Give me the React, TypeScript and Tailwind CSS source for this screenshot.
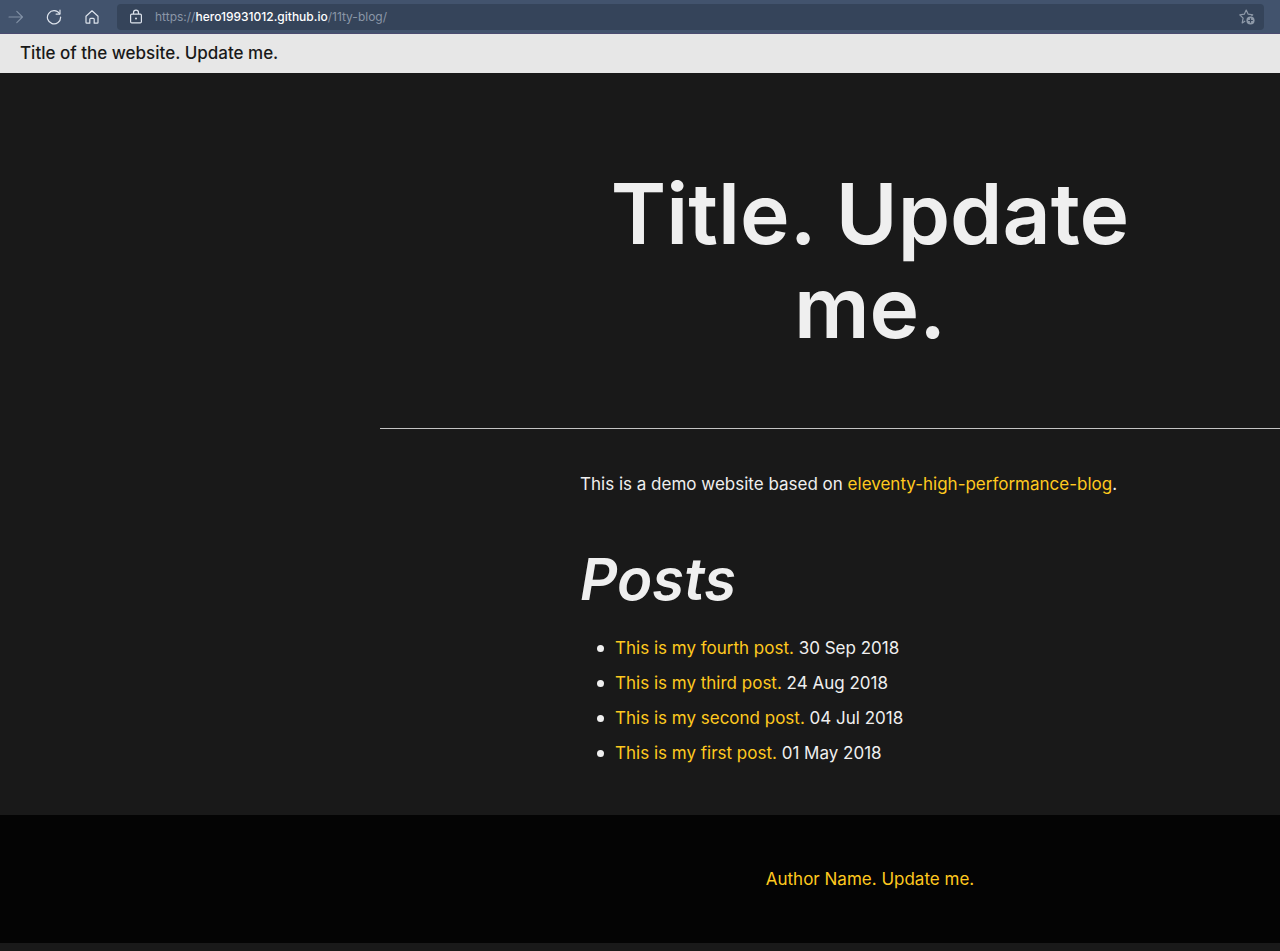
const posts = [
  { title: "This is my fourth post.", date: "30 Sep 2018" },
  { title: "This is my third post.", date: "24 Aug 2018" },
  { title: "This is my second post.", date: "04 Jul 2018" },
  { title: "This is my first post.", date: "01 May 2018" },
];

function ForwardIcon() {
  return (
    <svg viewBox="0 0 16 16" className="size-4" fill="none" stroke="currentColor" strokeWidth="1.1" strokeLinecap="round" strokeLinejoin="round" aria-hidden="true">
      <path d="M1 8h13.5M8.8 2.3 14.5 8l-5.7 5.7" />
    </svg>
  );
}

function ReloadIcon() {
  return (
    <svg viewBox="0 0 16 16" className="size-4" fill="none" stroke="currentColor" strokeWidth="1.2" strokeLinecap="round" strokeLinejoin="round" aria-hidden="true">
      <path d="M13.6 4.8A6.6 6.6 0 1 0 14.6 8" />
      <path d="M14 1.2v3.9h-3.9" />
    </svg>
  );
}

function HomeIcon() {
  return (
    <svg viewBox="0 0 16 16" className="size-4" fill="none" stroke="currentColor" strokeWidth="1.2" strokeLinejoin="round" aria-hidden="true">
      <path d="M2 7.2 8 1.8l6 5.4V13.4a.8.8 0 0 1-.8.8H10.2V10.2a.9.9 0 0 0-.9-.9H6.7a.9.9 0 0 0-.9.9v4H2.8a.8.8 0 0 1-.8-.8Z" />
    </svg>
  );
}

function LockIcon() {
  return (
    <svg viewBox="0 0 14 16" className="h-4 w-[14px]" fill="none" stroke="currentColor" strokeWidth="1.2" aria-hidden="true">
      <rect x="1.6" y="5.1" width="10.8" height="8.8" rx="1.2" />
      <path d="M4.5 5.1V3.7a2.5 2.5 0 0 1 5 0v1.4" />
      <circle cx="7" cy="9.5" r="1" fill="currentColor" stroke="none" />
    </svg>
  );
}

function FavoriteIcon() {
  return (
    <svg viewBox="0 0 16 16" className="size-4" fill="none" stroke="currentColor" strokeWidth="1.2" strokeLinejoin="round" aria-hidden="true">
      <path d="M6.2 12 3.2 13.9l.9-4.7L.8 5.9l4.5-.7L7.2 1l2 4.2 4.5.7-1.3 1.2" />
      <circle cx="11.5" cy="11.5" r="4.1" fill="currentColor" stroke="none" />
      <path d="M11.5 9.2v4.6M9.2 11.5h4.6" stroke="#35445a" strokeWidth="1.2" />
    </svg>
  );
}

function BrowserBar() {
  return (
    <div className="flex h-[34px] items-center border-b border-[#4a4a70] bg-[#42536d] text-[#dde3ec]">
      <button type="button" aria-label="Forward" className="ml-2 text-[#8291a6]">
        <ForwardIcon />
      </button>
      <button type="button" aria-label="Reload" className="ml-[22px]">
        <ReloadIcon />
      </button>
      <button type="button" aria-label="Home" className="ml-[22px]">
        <HomeIcon />
      </button>
      <div className="mr-4 ml-[17px] flex h-[26px] flex-1 items-center rounded-sm bg-[#35445a] pr-[9px] pl-3">
        <LockIcon />
        <button type="button" className="ml-3 flex-1 text-left text-xs text-[#8a96a7]">
          https://<span className="font-medium text-white">hero19931012.github.io</span>/11ty-blog/
        </button>
        <button type="button" aria-label="Add to favorites" className="text-[#8e99a8]">
          <FavoriteIcon />
        </button>
      </div>
    </div>
  );
}

export default function App() {
  return (
    <div className="min-h-screen overflow-x-hidden bg-[#191919] font-['Inter',sans-serif] text-[17px] text-[#efefef]">
      <BrowserBar />
      <header className="flex h-[39px] items-center bg-[#e7e7e7] px-5 font-medium text-[#191919]">
        <a href="#home">Title of the website. Update me.</a>
      </header>
      <main className="pb-11 pl-[380px]">
        <h1 className="ml-[200px] max-w-[580px] pt-[94px] pb-[73px] text-center text-[84px] leading-[94px] font-semibold">
          Title. Update me.
        </h1>
        <hr className="border-[#c4c4c4]" />
        <div className="ml-[200px] max-w-[580px]">
          <p className="pt-10 leading-[30px]">
            This is a demo website based on{" "}
            <a href="#source" className="text-[#ffc91f]">eleventy-high-performance-blog</a>.
          </p>
          <h2 className="mt-11 text-[58px] leading-[72px] font-semibold italic">Posts</h2>
          <ul className="mt-4">
            {posts.map((post) => (
              <li key={post.title} className="flex items-center leading-[35px] before:mr-[11px] before:ml-[17px] before:size-[7px] before:rounded-full before:bg-[#efefef]">
                <span>
                  <a href="#post" className="text-[#ffc91f]">{post.title}</a> {post.date}
                </span>
              </li>
            ))}
          </ul>
        </div>
      </main>
      <footer className="h-32 bg-[#040404] pt-[49px] pl-[580px]">
        <p className="max-w-[580px] text-center leading-[30px]">
          <a href="#author" className="text-[#ffc91f]">Author Name. Update me.</a>
        </p>
      </footer>
    </div>
  );
}
